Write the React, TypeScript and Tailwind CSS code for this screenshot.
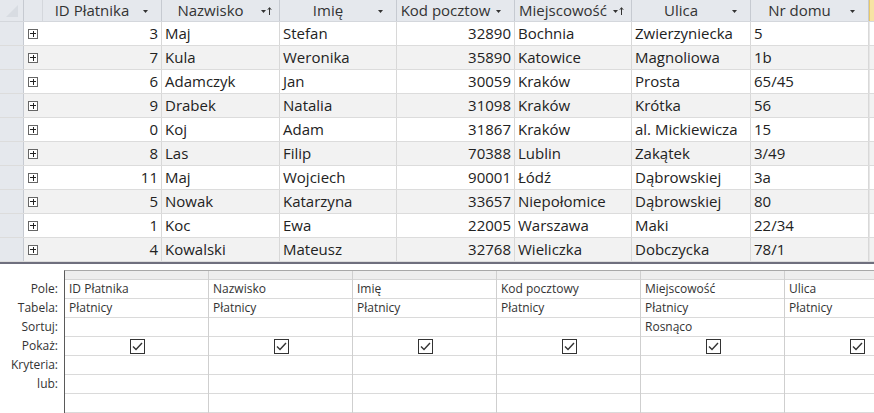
import React from 'react';

const font = { fontFamily: '"Open Sans", "Noto Sans", sans-serif' };

interface Col {
  label: string;
  w: string;
  sorted?: boolean;
  num?: boolean;
}

const cols: Col[] = [
  { label: 'ID Płatnika', w: 'w-[119px]', num: true },
  { label: 'Nazwisko', w: 'w-[118px]', sorted: true },
  { label: 'Imię', w: 'w-[117px]' },
  { label: 'Kod pocztow', w: 'w-[118px]', num: true },
  { label: 'Miejscowość', w: 'w-[117px]', sorted: true },
  { label: 'Ulica', w: 'w-[119px]' },
  { label: 'Nr domu', w: 'w-[118px]' },
];

const rows: string[][] = [
  ['3', 'Maj', 'Stefan', '32890', 'Bochnia', 'Zwierzyniecka', '5'],
  ['7', 'Kula', 'Weronika', '35890', 'Katowice', 'Magnoliowa', '1b'],
  ['6', 'Adamczyk', 'Jan', '30059', 'Kraków', 'Prosta', '65/45'],
  ['9', 'Drabek', 'Natalia', '31098', 'Kraków', 'Krótka', '56'],
  ['0', 'Koj', 'Adam', '31867', 'Kraków', 'al. Mickiewicza', '15'],
  ['8', 'Las', 'Filip', '70388', 'Lublin', 'Zakątek', '3/49'],
  ['11', 'Maj', 'Wojciech', '90001', 'Łódź', 'Dąbrowskiej', '3a'],
  ['5', 'Nowak', 'Katarzyna', '33657', 'Niepołomice', 'Dąbrowskiej', '80'],
  ['1', 'Koc', 'Ewa', '22005', 'Warszawa', 'Maki', '22/34'],
  ['4', 'Kowalski', 'Mateusz', '32768', 'Wieliczka', 'Dobczycka', '78/1'],
];

function DropArrow({ sorted }: { sorted?: boolean }) {
  return (
    <svg width="14" height="10" viewBox="0 0 14 10" className="shrink-0">
      <path d="M2 4 L7 4 L4.5 7 Z" fill="#333" />
      {sorted && (
        <>
          <path d="M10.5 2 L10.5 9" stroke="#333" strokeWidth="1" />
          <path d="M8.8 3.8 L10.5 1.6 L12.2 3.8" stroke="#333" strokeWidth="1" fill="none" />
        </>
      )}
    </svg>
  );
}

function Expander() {
  return (
    <div className="w-[10px] h-[10px] border border-[#666] bg-white flex items-center justify-center relative">
      <div className="absolute w-[6px] h-px bg-[#222]" />
      <div className="absolute w-px h-[6px] bg-[#222]" />
    </div>
  );
}

function Check() {
  return (
    <div className="w-[15px] h-[15px] border border-[#333] bg-white flex items-center justify-center">
      <svg width="11" height="9" viewBox="0 0 11 9">
        <path d="M1 4.5 L4 7.5 L10 1" stroke="#333" strokeWidth="1.4" fill="none" />
      </svg>
    </div>
  );
}

function Datasheet() {
  return (
    <div className="flex flex-col">
      <div className="flex h-[22px] bg-[#e5e8ed] border-b border-[#d4d7dc] text-[15px] text-[#333]">
        <div className="w-[24px] shrink-0 border-r border-[#c6cad1] flex items-end justify-start pl-[5px] pb-[3px]">
          <svg width="14" height="14" viewBox="0 0 14 14">
            <path d="M13 1 L13 13 L1 13 Z" fill="#d8dce2" />
          </svg>
        </div>
        <div className="w-[19px] shrink-0 border-r border-[#d4d7dc]" />
        {cols.map((c) => (
          <div key={c.label} className={`${c.w} shrink-0 border-r border-[#c6cad1] flex items-center pr-[6px] overflow-hidden`}>
            <span className="flex-1 text-center whitespace-nowrap leading-none">{c.label}</span>
            <DropArrow sorted={c.sorted} />
          </div>
        ))}
        <div className="flex-1 bg-[#f7e3a4] border-l border-[#e8c96a]" />
      </div>
      {rows.map((r, i) => (
        <div
          key={i}
          className={`flex h-[24px] border-b border-[#dcdcdc] text-[15px] text-[#222] ${i % 2 === 1 ? 'bg-[#f2f2f2]' : 'bg-white'}`}
        >
          <div className="w-[24px] shrink-0 bg-[#e5e8ed] border-r border-[#c6cad1]" />
          <div className="w-[19px] shrink-0 flex items-center justify-center pr-[1px]">
            <Expander />
          </div>
          {r.map((v, j) => (
            <div
              key={j}
              className={`${cols[j].w} shrink-0 border-r border-[#d8d8d8] flex items-center whitespace-nowrap overflow-hidden ${
                cols[j].num ? 'justify-end pr-[3px]' : 'pl-[3px]'
              }`}
            >
              {v}
            </div>
          ))}
          <div className="flex-1 border-l border-[#e6e6e6]" />
        </div>
      ))}
    </div>
  );
}

const designCols = [
  { pole: 'ID Płatnika', tabela: 'Płatnicy', sortuj: '' },
  { pole: 'Nazwisko', tabela: 'Płatnicy', sortuj: '' },
  { pole: 'Imię', tabela: 'Płatnicy', sortuj: '' },
  { pole: 'Kod pocztowy', tabela: 'Płatnicy', sortuj: '' },
  { pole: 'Miejscowość', tabela: 'Płatnicy', sortuj: 'Rosnąco' },
  { pole: 'Ulica', tabela: 'Płatnicy', sortuj: '' },
];

const labels = ['Pole:', 'Tabela:', 'Sortuj:', 'Pokaż:', 'Kryteria:', 'lub:', ''];

function DesignGrid() {
  return (
    <div className="flex pt-[6px] bg-white">
      <div className="w-[64px] shrink-0 flex flex-col pt-[9px] text-[12px] text-[#333]">
        {labels.map((l, i) => (
          <div key={i} className="h-[19px] flex items-center justify-end pr-[6px] leading-none">
            {l}
          </div>
        ))}
      </div>
      <div className="flex-1 flex border-l border-[#5a5a5a] border-t border-t-[#a8a8a8] overflow-hidden">
        {designCols.map((c, i) => (
          <div key={i} className="w-[144px] shrink-0 flex flex-col border-r border-[#cfcfcf] text-[12px] text-[#333]">
            <div className="h-[9px] bg-[#eeeeee] border-b border-[#d6d6d6]" />
            <div className="h-[19px] border-b border-[#dadada] flex items-center pl-[4px] whitespace-nowrap leading-none">{c.pole}</div>
            <div className="h-[19px] border-b border-[#dadada] flex items-center pl-[4px] whitespace-nowrap leading-none">{c.tabela}</div>
            <div className="h-[19px] border-b border-[#dadada] flex items-center pl-[4px] whitespace-nowrap leading-none">{c.sortuj}</div>
            <div className="h-[19px] border-b border-[#dadada] flex items-center justify-center pl-[2px]">
              <Check />
            </div>
            <div className="h-[19px] border-b border-[#dadada]" />
            <div className="h-[19px] border-b border-[#dadada]" />
            <div className="h-[19px] border-b border-[#dadada]" />
          </div>
        ))}
      </div>
    </div>
  );
}

export default function App() {
  return (
    <div className="w-[874px] h-[413px] overflow-hidden bg-white flex flex-col" style={font}>
      <Datasheet />
      <div className="h-[2px] bg-[#6f6f7e]" />
      <DesignGrid />
    </div>
  );
}
